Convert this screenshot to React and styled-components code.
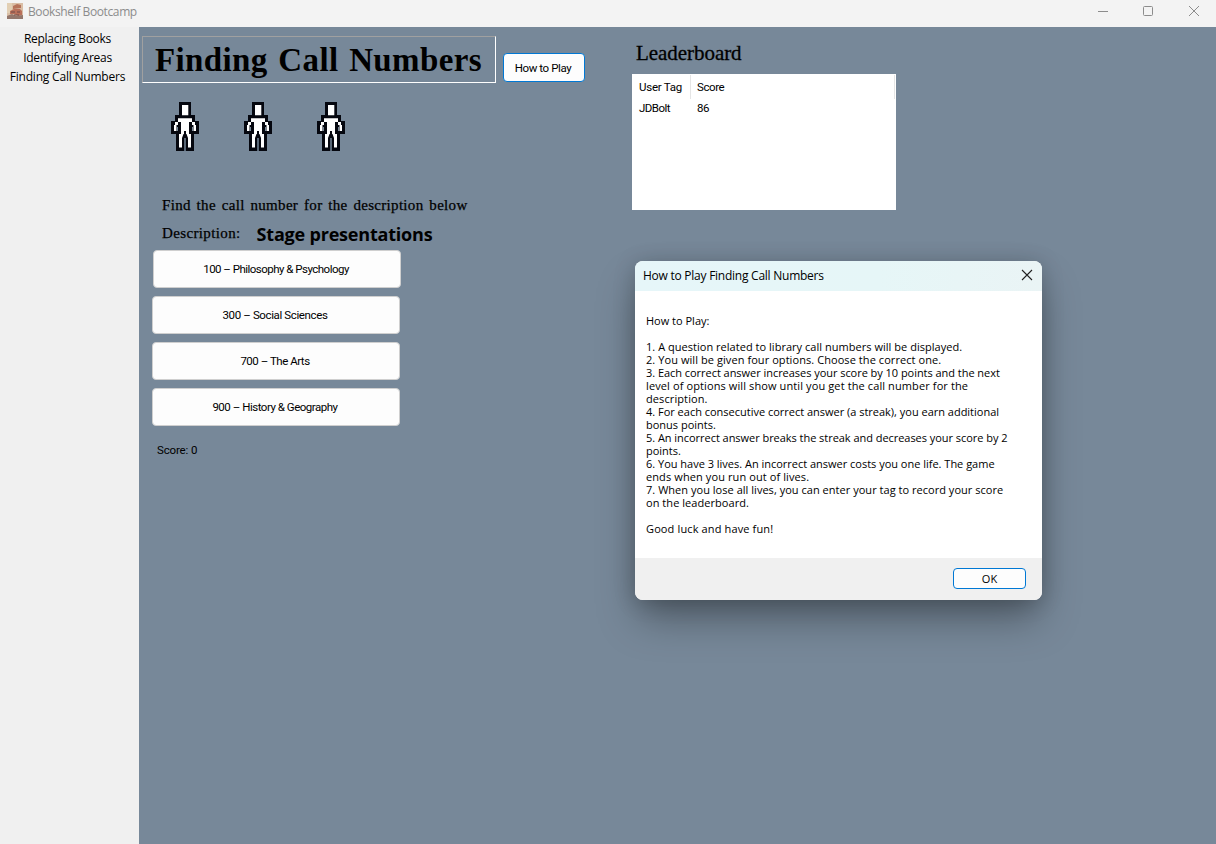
import React from 'react';
import styled, { createGlobalStyle } from 'styled-components';

const Global = createGlobalStyle`
  * { box-sizing: border-box; }
  body { margin: 0; overflow: hidden; }
  button { font: inherit; color: inherit; padding: 0; margin: 0; }
`;
const ui = `'Open Sans', 'Noto Sans', sans-serif`;
const gothic = `Roboto, 'Liberation Sans', sans-serif`;

const Window = styled.div`
  position: relative; width: 1216px; height: 844px;
  display: flex; flex-direction: column; background: #f0f0f0; color: #000;
  font-family: ${ui}; font-size: 12px;
`;
const TitleBar = styled.header`
  height: 27px; display: flex; align-items: flex-start; background: #f3f3f3; color: #8c8c8c; padding-left: 7px;
`;
const AppTitle = styled.div`
  flex: 1; margin-left: 5px; line-height: 24px; letter-spacing: ${p => p.$ls}px; white-space: nowrap;
`;
const Body = styled.div`flex: 1; display: flex;`;
const Sidebar = styled.nav`
  width: 139px; padding-top: 2px; display: flex; flex-direction: column; align-items: center; padding-right: 4px;
`;
const NavItem = styled.a`line-height: 19px; white-space: nowrap; letter-spacing: ${p => p.$ls}px;`;
const Main = styled.main`flex: 1; display: flex; background: #778899;`;
const Game = styled.section`width: 493px; font-family: ${gothic}; font-size: 11.5px;`;
const Header = styled.div`display: flex; padding: 9px 0 0 3px; align-items: flex-start;`;
const Heading = styled.h1`
  margin: 0; width: 354px; height: 47px; padding-left: 12px; border: 1px solid; border-color: #a0a0a0 #fff #fff #a0a0a0;
  font: bold 33px/46px 'Liberation Serif', serif; letter-spacing: ${p => p.$ls}px; word-spacing: 2px; white-space: nowrap;
`;
const HelpButton = styled.button`
  width: 82px; height: 29px; margin: 17px 0 0 7px; border: 1px solid #0078d4; border-radius: 4px; background: #fdfdfd;
  letter-spacing: ${p => p.$ls}px; white-space: nowrap; padding-right: 2px;
`;
const Lives = styled.div`display: flex; gap: 43px; padding: 18px 0 0 31px; height: 108px; svg { display: block; }`;
const Line = styled.div`
  display: flex; align-items: center; height: 28px; padding-left: 23px; white-space: nowrap;
  font: 15px/28px 'Liberation Serif', serif; -webkit-text-stroke: 0.25px #000; word-spacing: ${p => p.$ws || 0}px;
`;
const Spaced = styled.span`letter-spacing: ${p => p.$ls}px;`;
const Answer = styled.strong`
  font: bold 18px/28px ${ui}; margin-left: 16px; letter-spacing: ${p => p.$ls}px; -webkit-text-stroke: 0;
  padding-top: 2px;
`;
const Options = styled.div`display: flex; flex-direction: column; gap: 8px; padding: 3px 0 0 13px;`;
const Option = styled.button`
  width: 248px; height: 38px; margin-left: ${p => (p.$first ? 1 : 0)}px; border: 1px solid #cfcfcf; border-radius: 4px;
  background: #fdfdfd; letter-spacing: ${p => p.$ls}px; white-space: nowrap; padding-right: 2px;
`;
const Score = styled.div`padding: 16px 0 0 18px; line-height: 16px; letter-spacing: ${p => p.$ls}px;`;
const Board = styled.section`width: 264px; padding-top: 12px; font-family: ${gothic}; font-size: 11.5px;`;
const BoardTitle = styled.h2`
  margin: 0 0 0 4px; height: 35px; font: 21px/29px 'Liberation Serif', serif; letter-spacing: ${p => p.$ls}px;
  -webkit-text-stroke: 0.3px #000;
`;
const Table = styled.div`height: 136px; background: #fff; padding-top: 1px;`;
const Row = styled.div`
  display: grid; grid-template-columns: 59px 205px; height: ${p => (p.$head ? 24 : 18)}px;
  line-height: ${p => (p.$head ? 24 : 18)}px;
`;
const Cell = styled.div`
  padding-left: ${p => (p.$second ? 6 : 7)}px; border-right: 1px solid ${p => (p.$head ? '#e5e5e5' : 'transparent')};
  margin-right: ${p => (p.$second ? 1 : 0)}px; letter-spacing: ${p => p.$ls}px; white-space: nowrap;
`;
const Dialog = styled.div`
  position: absolute; left: 635px; top: 261px; width: 407px; height: 339px; border-radius: 8px; overflow: hidden;
  display: flex; flex-direction: column; background: #fff;
  box-shadow: 0 22px 40px -4px rgba(0,0,0,.34), 0 2px 22px rgba(0,0,0,.2);
`;
const DialogBar = styled.div`
  height: 30px; padding: 0 9px 0 8px; background: linear-gradient(90deg, #e6f6f9, #e6f6f7 60%, #eaf4f5);
  display: flex; justify-content: space-between; line-height: 30px; svg { margin-top: 8px; }
`;
const Message = styled.div`flex: 1; padding: 23px 0 0 11px; font-size: 11px; line-height: 13px;`;
const TextLine = styled.div`height: 13px; white-space: nowrap; letter-spacing: ${p => p.$ls}px;`;
const Footer = styled.div`height: 42px; background: #f0f0f0; display: flex; justify-content: flex-end; padding: 10px 16px 0;`;
const OkButton = styled.button`
  width: 73px; height: 21px; border: 1px solid #0078d4; border-radius: 4px; background: #fdfdfd; font-size: 11px; line-height: 18px;
`;
const Icon = styled.svg`display: block; margin-top: 3px;`;

const AppIcon = () => (
  <Icon width="16" height="16" viewBox="0 0 16 16">
    <rect width="16" height="16" fill="#d9bea6" />
    <rect width="5" height="10" fill="#e2cfb4" />
    <path d="M6 3l4-2 4 1v3l-8 1z" fill="#b5735a" />
    <path d="M3 8l4-2 6 0 2 2v4l-3 1-5-2-4 0z" fill="#b9705a" />
    <path d="M0 13l5-2 4 2 7-1v4H0z" fill="#94776c" />
    <path d="M4 9h4M10 9h3M7 12h5" stroke="#6f4a48" />
  </Icon>
);
const Person = () => (
  <svg width="30" height="51" viewBox="0 0 30 51">
    <path fill="#05070f" d="M9 1h12v13h4v6h4v13h-5v17H15.500V37h-1V50H6V33H1V20h4v-6h4z" />
    <path fill="#fff" d="M12 4h6.300v10.300H12zM8 17.300h14V21h3v3h1v6h-2.500v-6H22v-3h-3v10h2v15.500h-3V37l-1.500-4h-3L12 37v9.500H9V31h2V21H8v3H6.500v6H4v-6h1v-3h3z" />
    <path fill="#05070f" d="M8 21h3v12H8zM19 21h3v12h-3zM14 30h2v4h-2z" />
    <path fill="#778899" d="M7 26h1v4H7zM22 26h1v4h-1zM14.500 37h1v13h-1z" />
  </svg>
);

const rules = [
  ['How to Play:', 0], ['', 0],
  ['1. A question related to library call numbers will be displayed.', 0.03],
  ['2. You will be given four options. Choose the correct one.', 0.07],
  ['3. Each correct answer increases your score by 10 points and the next', -0.04],
  ['level of options will show until you get the call number for the', 0.11],
  ['description.', 0.1],
  ['4. For each consecutive correct answer (a streak), you earn additional', -0.01],
  ['bonus points.', 0],
  ['5. An incorrect answer breaks the streak and decreases your score by 2', -0.04],
  ['points.', 0],
  ['6. You have 3 lives. An incorrect answer costs you one life. The game', -0.01],
  ['ends when you run out of lives.', 0.1],
  ['7. When you lose all lives, you can enter your tag to record your score', 0.03],
  ['on the leaderboard.', 0.05], ['', 0],
  ['Good luck and have fun!', 0.13],
];
const options = [
  ['100 – Philosophy & Psychology', -0.52], ['300 – Social Sciences', -0.38],
  ['700 – The Arts', -0.48], ['900 – History & Geography', -0.48],
];

export default function App() {
  return (
    <Window>
      <Global />
      <TitleBar>
        <AppIcon />
        <AppTitle $ls={-0.39}>Bookshelf Bootcamp</AppTitle>
        <svg width="136" height="26" fill="none" stroke="#8c8c8c">
          <path d="M18 11.5h10" /><rect x="63.5" y="6.500" width="9" height="9" rx="1" />
          <path d="M109 6l10 10M119 6l-10 10" />
        </svg>
      </TitleBar>
      <Body>
        <Sidebar>
          <NavItem $ls={-0.27}>Replacing Books</NavItem>
          <NavItem $ls={-0.3}>Identifying Areas</NavItem>
          <NavItem $ls={-0.2}>Finding Call Numbers</NavItem>
        </Sidebar>
        <Main>
          <Game>
            <Header>
              <Heading $ls={0.38}>Finding Call Numbers</Heading>
              <HelpButton $ls={-0.4}>How to Play</HelpButton>
            </Header>
            <Lives><Person /><Person /><Person /></Lives>
            <Line $ws={1.8}><Spaced $ls={0.31}>Find the call number for the description below</Spaced></Line>
            <Line><Spaced $ls={0.37}>Description:</Spaced><Answer $ls={-0.2}>Stage presentations</Answer></Line>
            <Options>
              {options.map(([t, ls], i) => <Option key={t} $first={i === 0} $ls={ls}>{t}</Option>)}
            </Options>
            <Score $ls={-0.15}>Score: 0</Score>
          </Game>
          <Board>
            <BoardTitle $ls={-0.05}>Leaderboard</BoardTitle>
            <Table>
              <Row $head><Cell $head $ls={-0.25}>User Tag</Cell><Cell $head $second $ls={-0.4}>Score</Cell></Row>
              <Row><Cell $ls={-0.55}>JDBolt</Cell><Cell $second $ls={-0.4}>86</Cell></Row>
            </Table>
          </Board>
        </Main>
      </Body>
      <Dialog>
        <DialogBar>
          <Spaced $ls={-0.25}>How to Play Finding Call Numbers</Spaced>
          <svg width="12" height="12" fill="none" stroke="#222" strokeWidth="1.1"><path d="M1 1l10 10M11 1L1 11" /></svg>
        </DialogBar>
        <Message>
          {rules.map(([t, ls], i) => <TextLine key={i} $ls={ls}>{t}</TextLine>)}
        </Message>
        <Footer><OkButton>OK</OkButton></Footer>
      </Dialog>
    </Window>
  );
}
